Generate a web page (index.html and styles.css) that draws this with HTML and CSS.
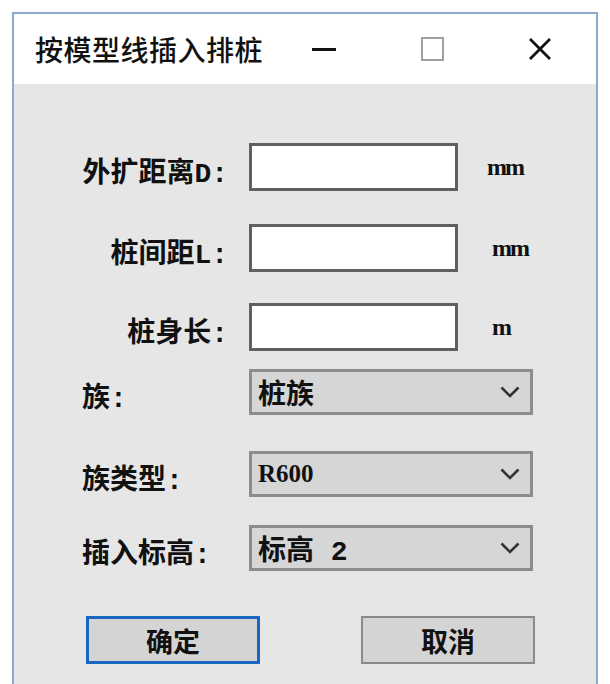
FILE: index.html
```html
<!DOCTYPE html>
<html lang="zh-CN">
<head>
<meta charset="utf-8">
<title>按模型线插入排桩</title>
<link rel="stylesheet" href="styles.css">
</head>
<body>
<div class="window">
  <div class="titlebar">
    <div class="title">按模型线插入排桩</div>
    <div class="cap-btn"><span class="min-line"></span></div>
    <div class="cap-btn"><span class="max-box"></span></div>
    <div class="cap-btn">
      <svg width="24" height="24" viewBox="0 0 24 24"><path d="M2 2 L22 22 M22 2 L2 22" stroke="#111" stroke-width="2.8" fill="none"/></svg>
    </div>
  </div>
  <div class="client">
    <div class="row r1">
      <label class="lbl right">外扩距离D:</label>
      <div class="input"></div>
      <span class="unit u1">mm</span>
    </div>
    <div class="row r2">
      <label class="lbl right">桩间距L:</label>
      <div class="input"></div>
      <span class="unit">mm</span>
    </div>
    <div class="row r3">
      <label class="lbl right">桩身长:</label>
      <div class="input"></div>
      <span class="unit">m</span>
    </div>
    <div class="row r4">
      <label class="lbl">族:</label>
      <div class="select"><span class="val">桩族</span><svg class="chev" width="20" height="12" viewBox="0 0 20 12"><path d="M1.5 1.5 L10 10 L18.5 1.5" stroke="#333" stroke-width="2.6" fill="none"/></svg></div>
    </div>
    <div class="row r5">
      <label class="lbl">族类型:</label>
      <div class="select"><span class="val latin">R600</span><svg class="chev" width="20" height="12" viewBox="0 0 20 12"><path d="M1.5 1.5 L10 10 L18.5 1.5" stroke="#333" stroke-width="2.6" fill="none"/></svg></div>
    </div>
    <div class="row r6">
      <label class="lbl">插入标高:</label>
      <div class="select"><span class="val">标高 2</span><svg class="chev" width="20" height="12" viewBox="0 0 20 12"><path d="M1.5 1.5 L10 10 L18.5 1.5" stroke="#333" stroke-width="2.6" fill="none"/></svg></div>
    </div>
    <div class="buttons">
      <div class="btn primary">确定</div>
      <div class="btn">取消</div>
    </div>
  </div>
</div>
</body>
</html>
```

FILE: styles.css
```css
html, body {
  margin: 0;
  padding: 0;
  background: #ffffff;
  overflow: hidden;
}
body {
  width: 610px;
  height: 684px;
  font-family: "Liberation Mono", "Noto Sans CJK SC", monospace;
  color: #111;
}
.window {
  margin: 12px 0 0 12px;
  width: 582px;
  height: 700px;
  border: 2px solid #8aaad2;
  border-bottom: none;
  background: #e6e6e6;
}
.titlebar {
  height: 70px;
  background: #ffffff;
  display: flex;
  align-items: center;
}
.title {
  flex: 1;
  padding-left: 21px;
  font-family: "Noto Sans CJK SC", sans-serif;
  font-size: 28px;
  font-weight: 500;
  color: #111;
  letter-spacing: 0.5px;
}
.cap-btn {
  width: 108px;
  height: 70px;
  display: flex;
  align-items: center;
  justify-content: center;
}
.cap-btn:last-child {
  margin-right: 2px;
}
.min-line {
  width: 24px;
  height: 3px;
  background: #111;
}
.max-box {
  width: 19px;
  height: 20px;
  border: 2px solid #a0a0a0;
}
.client {
  padding: 59px 0 0 68px;
}
.row {
  display: flex;
  align-items: center;
}
.lbl {
  width: 150px;
  margin-right: 17px;
  font-size: 28px;
  font-weight: 700;
  padding-top: 5px;
  white-space: nowrap;
}
.lbl.right {
  text-align: right;
  width: 146px;
  margin-right: 21px;
}
.input {
  width: 203px;
  height: 42px;
  background: #ffffff;
  border: 3px solid #606060;
}
.unit {
  font-family: "Liberation Serif", serif;
  font-weight: bold;
  font-size: 24px;
  margin-left: 34px;
  letter-spacing: -2px;
}
.unit.u1 {
  margin-left: 29px;
}
.r2 { margin-top: 33px; }
.r3 { margin-top: 31px; }
.r4 { margin-top: 18px; }
.r5 { margin-top: 36px; }
.r6 { margin-top: 28px; }
.select {
  width: 278px;
  height: 40px;
  background: #d6d6d6;
  border: 3px solid #8c8c8c;
  display: flex;
  align-items: center;
  justify-content: space-between;
}
.val {
  padding-left: 6px;
  font-size: 28px;
  font-weight: 700;
}
.val.latin {
  font-family: "Liberation Serif", serif;
  font-weight: bold;
  font-size: 25px;
  letter-spacing: 0;
}
.chev {
  margin-right: 10px;
}
.buttons {
  display: flex;
  gap: 101px;
  margin-top: 45px;
  padding-left: 4px;
}
.btn {
  width: 170px;
  height: 44px;
  border: 2px solid #8a8a8a;
  background: #d4d4d4;
  display: flex;
  align-items: center;
  justify-content: center;
  font-family: "Noto Sans CJK SC", sans-serif;
  font-size: 27px;
  font-weight: 700;
}
.btn.primary {
  width: 168px;
  height: 42px;
  border: 3px solid #1766c2;
}
```
